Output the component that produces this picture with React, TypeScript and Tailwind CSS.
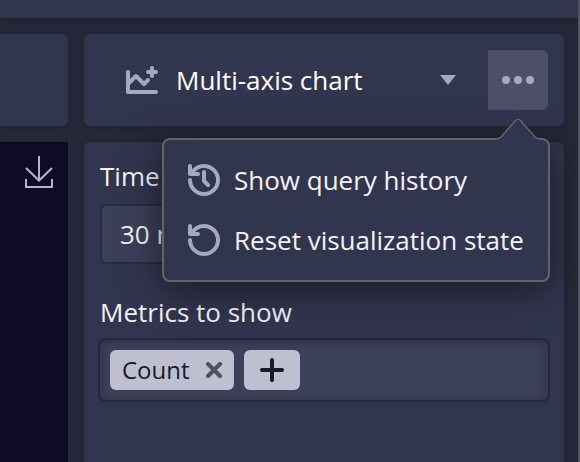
import { useState } from "react";
import type { ReactNode } from "react";

function ChartIcon() {
  return (
    <svg width="32" height="32" viewBox="0 0 32 32" fill="none" stroke="#a5a8be" strokeWidth="4" strokeLinecap="round" strokeLinejoin="round" aria-hidden="true">
      <path d="M2 8v20h28" />
      <path d="M3 19l7-7 8 8 4-4" />
      <path d="M26 4v8M22 8h8" />
    </svg>
  );
}

function ResetIcon({ clock = false }: { clock?: boolean }) {
  return (
    <svg className="shrink-0" width="32" height="32" viewBox="0 0 32 32" fill="none" stroke="#a5a8be" strokeWidth="4" strokeLinecap="round" strokeLinejoin="round" aria-hidden="true">
      <path d="M2 16A14 14 0 1 0 16 2C11 2 6.600 4.600 4 8.700" />
      <path d="M2 2v8h8" />
      {clock && <path d="M16 8v9l4 4" />}
    </svg>
  );
}

function DownloadIcon() {
  return (
    <svg width="28" height="32" viewBox="0 0 28 32" fill="none" stroke="#b3b5cb" strokeWidth="2" aria-hidden="true">
      <path d="M14 0v24M1 12l13 12.500L27 12M1 23v8h26v-8" />
    </svg>
  );
}

function MenuItem({ icon, children }: { icon: ReactNode; children: ReactNode }) {
  return (
    <button type="button" role="menuitem" className="flex h-[60px] w-full items-center gap-[14px] px-6 text-left whitespace-nowrap">
      {icon}
      {children}
    </button>
  );
}

export default function App() {
  const [range, setRange] = useState("30 minutes");

  return (
    <div className="flex min-h-screen flex-col overflow-hidden border-r-2 border-[#505161] bg-[#262839] font-['Open_Sans','Noto_Sans',sans-serif] text-[26px] leading-9 text-[#f2f3f8]">
      <header className="h-[18px] shrink-0 bg-[#32354e] shadow-[0_2px_6px_rgba(0,0,0,0.2)]" />

      <div className="flex flex-1 gap-4 pt-4 pr-[14px]">
        <main className="flex min-w-0 flex-1 flex-col gap-4">
          <div className="h-[92px] rounded-r-md bg-[#32354e] shadow-[0_0_6px_rgba(0,0,0,0.2)]" />
          <section className="flex flex-1 justify-end bg-[#0f0b27] px-[15px] pt-[14px]">
            <button type="button" aria-label="Download" className="h-8">
              <DownloadIcon />
            </button>
          </section>
        </main>

        <aside className="flex w-[480px] shrink-0 flex-col gap-4">
          <div className="flex h-[92px] items-center rounded-md bg-[#32354e] pr-4 shadow-[0_0_6px_rgba(0,0,0,0.2)]">
            <button type="button" className="flex h-[60px] flex-1 items-center gap-[18px] pr-8 pl-[42px] text-left text-white">
              <ChartIcon />
              <span className="flex-1">Multi-axis chart</span>
              <svg width="16" height="10" viewBox="0 0 16 10" fill="#a5a8be" aria-hidden="true">
                <path d="M0 0h16L8 10z" />
              </svg>
            </button>
            <div className="relative">
              <button type="button" aria-label="More actions" aria-haspopup="menu" className="flex h-[60px] w-[60px] items-center justify-center rounded-r-md bg-[#4d4e68]">
                <svg width="32" height="8" viewBox="0 0 32 8" fill="#a5a8be" aria-hidden="true">
                  <circle cx="4" cy="4" r="4" />
                  <circle cx="16" cy="4" r="4" />
                  <circle cx="28" cy="4" r="4" />
                </svg>
              </button>
              <div role="menu" className="absolute top-full -right-0.5 z-10 mt-7 w-[388px] rounded-lg border-2 border-[#626467] bg-[#32354e] py-[10px] shadow-[0_8px_40px_rgba(0,0,0,0.5)]">
                <svg className="absolute -top-[22px] right-2" width="44" height="24" viewBox="0 0 44 24" fill="#32354e" aria-hidden="true">
                  <path d="M0 24v-3q3 0 5-2L19.500 2.500q2.500-2.500 5 0L39 19q2 2 5 2v3z" />
                  <path d="M0 21q3 0 5-2L19.500 2.500q2.500-2.500 5 0L39 19q2 2 5 2" fill="none" stroke="#626467" strokeWidth="1.500" />
                </svg>
                <MenuItem icon={<ResetIcon clock />}>Show query history</MenuItem>
                <MenuItem icon={<ResetIcon />}>Reset visualization state</MenuItem>
              </div>
            </div>
          </div>

          <section className="flex-1 rounded-t-md bg-[#32354e] px-[14px] pt-4 shadow-[0_0_6px_rgba(0,0,0,0.2)]">
            <div className="px-0.5">
              <label htmlFor="range" className="block">Time Range</label>
              <input
                id="range"
                value={range}
                onChange={(e) => setRange(e.target.value)}
                className="mt-[10px] block h-[60px] w-full rounded-md border-2 border-[#292b3e] bg-[#3c3f58] px-[18px]"
              />
            </div>
            <h2 id="metrics" className="mt-[30px] px-0.5">Metrics to show</h2>
            <div role="group" aria-labelledby="metrics" className="mt-2 flex gap-[10px] rounded-lg border-2 border-[#26283a] bg-[#3c3f58] p-[10px] shadow-[inset_0_2px_8px_rgba(0,0,0,0.25)]">
              <span className="flex h-10 w-[124px] items-center justify-between rounded-md bg-[#bec0d1] px-3 text-[24px] text-[#171a2b]">
                Count
                <button type="button" aria-label="Remove Count">
                  <svg width="16" height="16" viewBox="0 0 16 16" stroke="#4e5162" strokeWidth="4" strokeLinecap="round" aria-hidden="true">
                    <path d="M2 2l12 12M14 2L2 14" />
                  </svg>
                </button>
              </span>
              <button type="button" aria-label="Add metric" className="flex h-10 w-14 items-center justify-center rounded-md bg-[#bec0d1]">
                <svg width="24" height="24" viewBox="0 0 24 24" stroke="#171a2b" strokeWidth="4" strokeLinecap="round" aria-hidden="true">
                  <path d="M12 2v20M2 12h20" />
                </svg>
              </button>
            </div>
          </section>
        </aside>
      </div>
    </div>
  );
}
